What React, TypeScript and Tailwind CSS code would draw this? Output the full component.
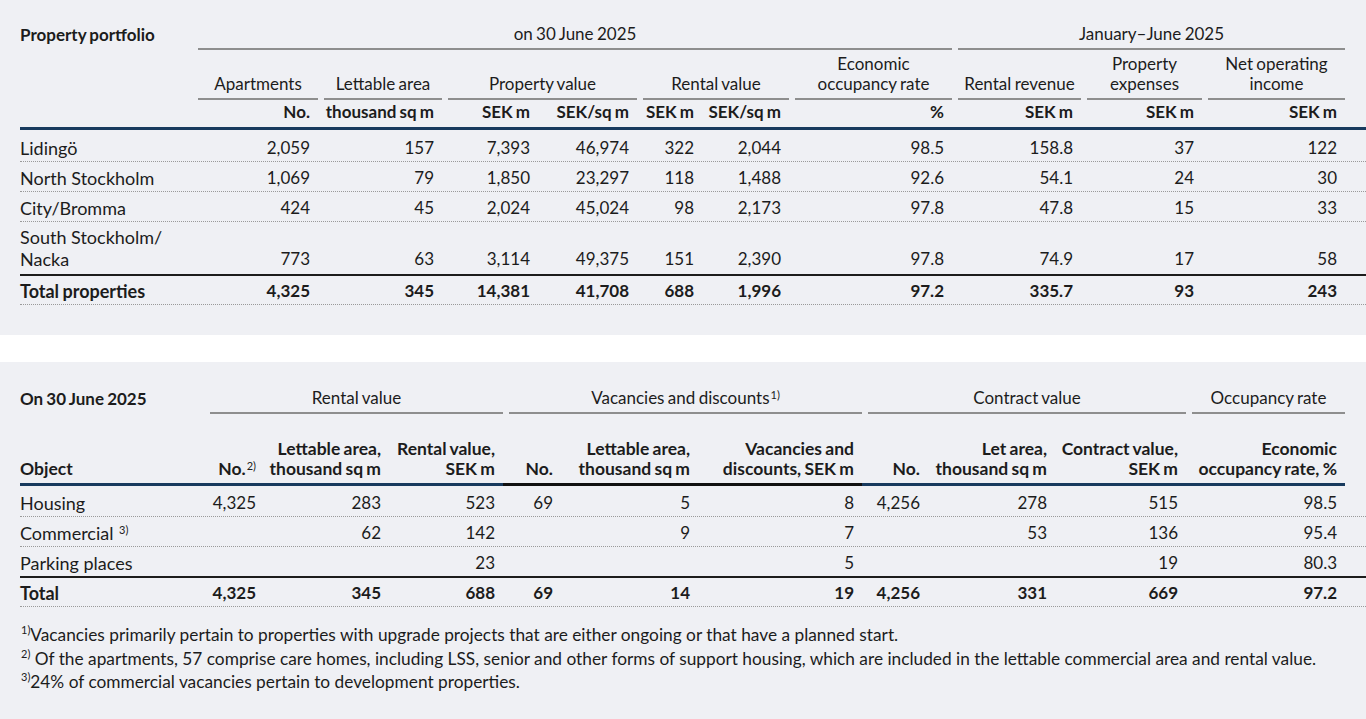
import React from "react";

const topGrid =
  "grid grid-cols-[172px_126px_124px_96px_99px_65px_87px_163px_129px_121px_143px]";
const botGrid =
  "grid grid-cols-[184px_60px_125px_114px_58px_137px_164px_66px_127px_131px_159px]";

type Row = { label: React.ReactNode; values: string[]; tall?: boolean };

const portfolio: Row[] = [
  { label: "Lidingö", values: ["2,059", "157", "7,393", "46,974", "322", "2,044", "98.5", "158.8", "37", "122"] },
  { label: "North Stockholm", values: ["1,069", "79", "1,850", "23,297", "118", "1,488", "92.6", "54.1", "24", "30"] },
  { label: "City/Bromma", values: ["424", "45", "2,024", "45,024", "98", "2,173", "97.8", "47.8", "15", "33"] },
  { label: <>South Stockholm/<br />Nacka</>, values: ["773", "63", "3,114", "49,375", "151", "2,390", "97.8", "74.9", "17", "58"], tall: true },
];
const portfolioTotal = ["4,325", "345", "14,381", "41,708", "688", "1,996", "97.2", "335.7", "93", "243"];

const Sup = ({ children }: { children: React.ReactNode }) => (
  <span className="text-[11px] font-normal align-top leading-[14px] ml-[1px]">{children}</span>
);

const objects: Row[] = [
  { label: "Housing", values: ["4,325", "283", "523", "69", "5", "8", "4,256", "278", "515", "98.5"] },
  { label: <>Commercial <Sup>3)</Sup></>, values: ["", "62", "142", "", "9", "7", "", "53", "136", "95.4"] },
  { label: "Parking places", values: ["", "", "23", "", "", "5", "", "", "19", "80.3"] },
];
const objectsTotal = ["4,325", "345", "688", "69", "14", "19", "4,256", "331", "669", "97.2"];

const GroupHead = ({ span, children }: { span: string; children: React.ReactNode }) => (
  <div className={span + " pl-[6px]"}>
    <div className="border-b-2 border-[#8e8e8e] text-center text-[17px] leading-[20px] pb-[4px] [word-spacing:-1px]">
      {children}
    </div>
  </div>
);

const PortfolioTable = () => (
  <div className="text-[#1c1c1c]">
    <div className={topGrid + " items-end"}>
      <div className="font-bold text-[17px] leading-[22px] pb-[4px] [word-spacing:-1px]">Property portfolio</div>
      <GroupHead span="col-span-7">on 30 June 2025</GroupHead>
      <GroupHead span="col-span-3">January–June 2025</GroupHead>
    </div>
    <div className={topGrid + " items-end mt-[4px]"}>
      <div />
      <GroupHead span="">Apartments</GroupHead>
      <GroupHead span="">Lettable area</GroupHead>
      <GroupHead span="col-span-2">Property value</GroupHead>
      <GroupHead span="col-span-2">Rental value</GroupHead>
      <GroupHead span="">Economic<br />occupancy rate</GroupHead>
      <GroupHead span="">Rental revenue</GroupHead>
      <GroupHead span="">Property<br />expenses</GroupHead>
      <GroupHead span="">Net operating<br />income</GroupHead>
    </div>
    <div className={topGrid + " border-b-[3px] border-[#183a5e] font-bold text-[17px] leading-[20px]"}>
      <div />
      {["No.", "thousand sq m", "SEK m", "SEK/sq m", "SEK m", "SEK/sq m", "%", "SEK m", "SEK m", "SEK m"].map((u, i) => (
        <div key={i} className="text-right pr-[8px] pt-[2px] pb-[5px] whitespace-nowrap [word-spacing:-1px]">
          {u}
        </div>
      ))}
    </div>
    {portfolio.map((r, ri) => (
      <div
        key={ri}
        className={
          topGrid +
          " items-end text-[17px] " +
          (r.tall
            ? "border-b-2 border-[#1c1c1c] leading-[22px] pt-[4px] pb-[4px]"
            : "border-b border-dotted border-[#9a9a9a] leading-[20px] pb-[3px] " +
              (ri === 0 ? "pt-[8px]" : "pt-[6px]"))
        }
      >
        <div className="text-[18px]">{r.label}</div>
        {r.values.map((v, i) => (
          <div key={i} className="text-right pr-[8px]">{v}</div>
        ))}
      </div>
    ))}
    <div className={topGrid + " font-bold text-[17px] leading-[20px] pt-[5px] pb-[3px] border-b border-dotted border-[#9a9a9a]"}>
      <div className="text-[18px] [word-spacing:-1px]">Total properties</div>
      {portfolioTotal.map((v, i) => (
        <div key={i} className="text-right pr-[8px]">{v}</div>
      ))}
    </div>
  </div>
);

const ObjectTable = () => {
  const heads: React.ReactNode[] = [
    <>No.<Sup>2)</Sup></>,
    <>Lettable area,<br />thousand sq m</>,
    <>Rental value,<br />SEK m</>,
    <>No.</>,
    <>Lettable area,<br />thousand sq m</>,
    <>Vacancies and<br />discounts, SEK m</>,
    <>No.</>,
    <>Let area,<br />thousand sq m</>,
    <>Contract value,<br />SEK m</>,
    <>Economic<br />occupancy rate, %</>,
  ];
  return (
    <div className="text-[#1c1c1c]">
      <div className={botGrid + " items-end"}>
        <div className="font-bold text-[17px] leading-[22px] pb-[4px] [word-spacing:-1px]">On 30 June 2025</div>
        <GroupHead span="col-span-3">Rental value</GroupHead>
        <GroupHead span="col-span-3">
          Vacancies and discounts<Sup>1)</Sup>
        </GroupHead>
        <GroupHead span="col-span-3">Contract value</GroupHead>
        <GroupHead span="">Occupancy rate</GroupHead>
      </div>
      <div className={botGrid + " items-end font-bold text-[17.5px] leading-[20px] mt-[25px]"}>
        <div className="pb-[4px] border-b-[3px] border-[#183a5e]">Object</div>
        {heads.map((h, i) => (
          <div
            key={i}
            className={
              "text-right pr-[8px] pb-[4px] border-b-[3px] whitespace-nowrap [word-spacing:-1px] " +
              (i >= 3 && i <= 5 ? "border-[#111111]" : "border-[#183a5e]")
            }
          >
            {h}
          </div>
        ))}
      </div>
      {objects.map((r, ri) => (
        <div
          key={ri}
          className={
            botGrid +
            " text-[17px] leading-[20px] pb-[3px] " +
            (ri === 0 ? "pt-[7px] " : "pt-[6px] ") +
            (ri === objects.length - 1
              ? "border-b-2 border-[#1c1c1c]"
              : "border-b border-dotted border-[#9a9a9a]")
          }
        >
          <div className="text-[18px]">{r.label}</div>
          {r.values.map((v, i) => (
            <div key={i} className="text-right pr-[8px]">{v}</div>
          ))}
        </div>
      ))}
      <div className={botGrid + " font-bold text-[17px] leading-[20px] pt-[5px] pb-[3px] border-b border-dotted border-[#9a9a9a]"}>
        <div className="text-[18px]">Total</div>
        {objectsTotal.map((v, i) => (
          <div key={i} className="text-right pr-[8px]">{v}</div>
        ))}
      </div>
      <div className="mt-[16px] text-[17.3px] leading-[23.5px]">
        <p><Sup>1)</Sup>Vacancies primarily pertain to properties with upgrade projects that are either ongoing or that have a planned start.</p>
        <p><Sup>2)</Sup> Of the apartments, 57 comprise care homes, including LSS, senior and other forms of support housing, which are included in the lettable commercial area and rental value.</p>
        <p><Sup>3)</Sup>24% of commercial vacancies pertain to development properties.</p>
      </div>
    </div>
  );
};

export default function App() {
  return (
    <div className="bg-white min-h-[719px] font-['Lato','Liberation_Sans',sans-serif]">
      <section className="bg-[#eff0f4] h-[335px] pl-[20px] pt-[24px]">
        <PortfolioTable />
      </section>
      <section className="bg-[#eff0f4] h-[357px] mt-[27px] pl-[20px] pt-[26px]">
        <ObjectTable />
      </section>
    </div>
  );
}
